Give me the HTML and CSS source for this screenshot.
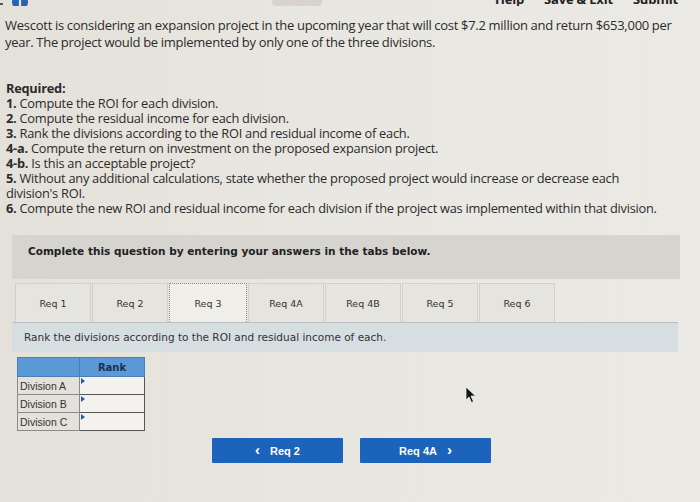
FILE: index.html
```html
<!DOCTYPE html>
<html>
<head>
<meta charset="utf-8">
<link rel="stylesheet" href="styles.css">
</head>
<body>
<div class="topbar">
  <div class="left-icons"><span class="dot2"></span><span class="info">i</span></div>
  <div class="pill"></div>
  <div class="top-links"><span>Help</span><span>Save &amp; Exit</span><span>Submit</span></div>
</div>
<p class="intro">Wescott is considering an expansion project in the upcoming year that will cost $7.2 million and return $653,000 per year. The project would be implemented by only one of the three divisions.</p>
<div class="required">
  <div class="req-title">Required:</div>
  <div><b>1.</b> Compute the ROI for each division.</div>
  <div><b>2.</b> Compute the residual income for each division.</div>
  <div><b>3.</b> Rank the divisions according to the ROI and residual income of each.</div>
  <div><b>4-a.</b> Compute the return on investment on the proposed expansion project.</div>
  <div><b>4-b.</b> Is this an acceptable project?</div>
  <div><b>5.</b> Without any additional calculations, state whether the proposed project would increase or decrease each division's ROI.</div>
  <div><b>6.</b> Compute the new ROI and residual income for each division if the project was implemented within that division.</div>
</div>
<div class="complete">Complete this question by entering your answers in the tabs below.</div>
<div class="tabs">
  <div class="tab">Req 1</div>
  <div class="tab">Req 2</div>
  <div class="tab active">Req 3</div>
  <div class="tab">Req 4A</div>
  <div class="tab">Req 4B</div>
  <div class="tab">Req 5</div>
  <div class="tab">Req 6</div>
</div>
<div class="prompt">Rank the divisions according to the ROI and residual income of each.</div>
<table class="rank">
  <tr><th></th><th>Rank</th></tr>
  <tr><td class="lbl">Division A</td><td class="inp"><span class="tri"></span></td></tr>
  <tr><td class="lbl">Division B</td><td class="inp"><span class="tri"></span></td></tr>
  <tr><td class="lbl">Division C</td><td class="inp"><span class="tri"></span></td></tr>
</table>
<div class="nav">
  <div class="btn"><span class="chev">&lsaquo;</span> Req 2</div>
  <div class="btn">Req 4A <span class="chev">&rsaquo;</span></div>
</div>
<svg class="cursor" width="12" height="18" viewBox="0 0 12 18"><path d="M1 1 L1 14 L4 11 L6.5 16.5 L8.5 15.5 L6 10 L10.5 10 Z" fill="#111" stroke="#eee" stroke-width="0.8"/></svg>
</body>
</html>
```
FILE: styles.css
```css
html, body { margin: 0; padding: 0; }
body {
  width: 700px;
  height: 502px;
  overflow: hidden;
  background: linear-gradient(90deg, #e4e1da 0%, #e9e7e1 50%, #ebe9e4 100%);
  font-family: "Open Sans", "Liberation Sans", sans-serif;
  color: #2b2b2b;
  position: relative;
}
.topbar {
  height: 6px;
  overflow: hidden;
  display: flex;
  align-items: flex-end;
  position: relative;
}
.left-icons { display: flex; align-items: flex-end; margin-left: 0; gap: 9px; }
.dot2 { width: 3px; height: 2px; background: #555; margin-bottom: 1px; }
.info {
  width: 16px; height: 16px; border-radius: 50%;
  background: #2a62b5; color: #fff; font-size: 11px; font-weight: bold;
  text-align: center; line-height: 16px; margin-bottom: -4px;
}
.pill {
  width: 50px; height: 14px; border-radius: 5px; background: #d9d3d0;
  margin-left: 244px; margin-bottom: -1px;
}
.top-links {
  margin-left: auto; margin-right: 22px; display: flex; gap: 20px;
  font-size: 13px; font-weight: bold; color: #222; line-height: 13px; margin-bottom: 0;
  letter-spacing: -0.2px;
}
.intro {
  margin: 11px 16px 0 5px;
  font-size: 13px;
  line-height: 17px;
  letter-spacing: -0.25px;
  word-spacing: -0.3px;
}
.required {
  margin: 30px 0 0 6px;
  font-size: 12.8px;
  line-height: 15px;
  letter-spacing: -0.25px;
  padding-right: 36px;
}
.required b, .req-title { font-weight: bold; }
.complete {
  margin: 19px 20px 0 12px;
  height: 44px;
  box-sizing: border-box;
  padding: 10px 16px;
  background: #d6d4ce;
  font-family: "DejaVu Sans", Verdana, sans-serif;
  font-weight: bold;
  font-size: 10.5px;
  color: #222;
}
.tabs {
  display: flex;
  margin: 4px 0 0 15px;
  height: 39px;
}
.tab {
  width: 76px;
  box-sizing: border-box;
  border: 1px solid #d3d0c9;
  border-bottom: none;
  background: #e6e4de;
  font-family: "DejaVu Sans", Verdana, sans-serif;
  font-size: 9.5px;
  color: #333;
  display: flex; align-items: center; justify-content: center;
  margin-right: 1px;
}
.tab.active {
  background: #efeee9;
  border: 1.5px dotted #888;
  border-bottom: none;
  width: 78px;
}
.prompt {
  margin: 0 22px 0 12px;
  height: 30px;
  border-top: 1px solid #b9c0c4;
  box-sizing: border-box;
  background: #d7dee1;
  font-family: "DejaVu Sans", Verdana, sans-serif;
  font-size: 10.5px;
  color: #333;
  padding: 8px 12px;
}
.rank {
  margin: 5px 0 0 17px;
  border-collapse: collapse;
  font-family: "Liberation Sans", Arial, sans-serif;
  font-size: 10.5px;
}
.rank th {
  background: #5a98d6;
  height: 18px;
  border: 1px solid #4a7fb5;
  padding: 0;
  font-family: "DejaVu Sans", Verdana, sans-serif;
  font-size: 10px;
  font-weight: bold;
  color: #1d2f55;
}
.rank th:first-child { width: 61px; }
.rank th:last-child { width: 64px; }
.rank td { height: 17px; padding: 0; border: 1px solid #8a8a8a; }
.rank td.lbl { background: #e3e1da; padding-left: 2px; color: #333; }
.rank td.inp { background: #f3f2ee; border: 1.5px solid #555; position: relative; vertical-align: top; }
.tri {
  position: absolute; left: 1px; top: 1px;
  width: 0; height: 0;
  border-top: 3px solid transparent; border-bottom: 3px solid transparent;
  border-left: 4px solid #2a5aa8;
}
.nav {
  display: flex;
  gap: 17px;
  margin: 7px 0 0 212px;
}
.btn {
  width: 131px; height: 25px;
  background: #1c63bb;
  color: #fff;
  font-family: "Liberation Sans", Arial, sans-serif;
  font-weight: bold;
  font-size: 11px;
  display: flex; align-items: center; justify-content: center; gap: 10px;
  border-radius: 1px;
}
.chev { font-size: 15px; line-height: 12px; position: relative; top: -1px; }
.cursor { position: absolute; left: 465px; top: 386px; }
```
